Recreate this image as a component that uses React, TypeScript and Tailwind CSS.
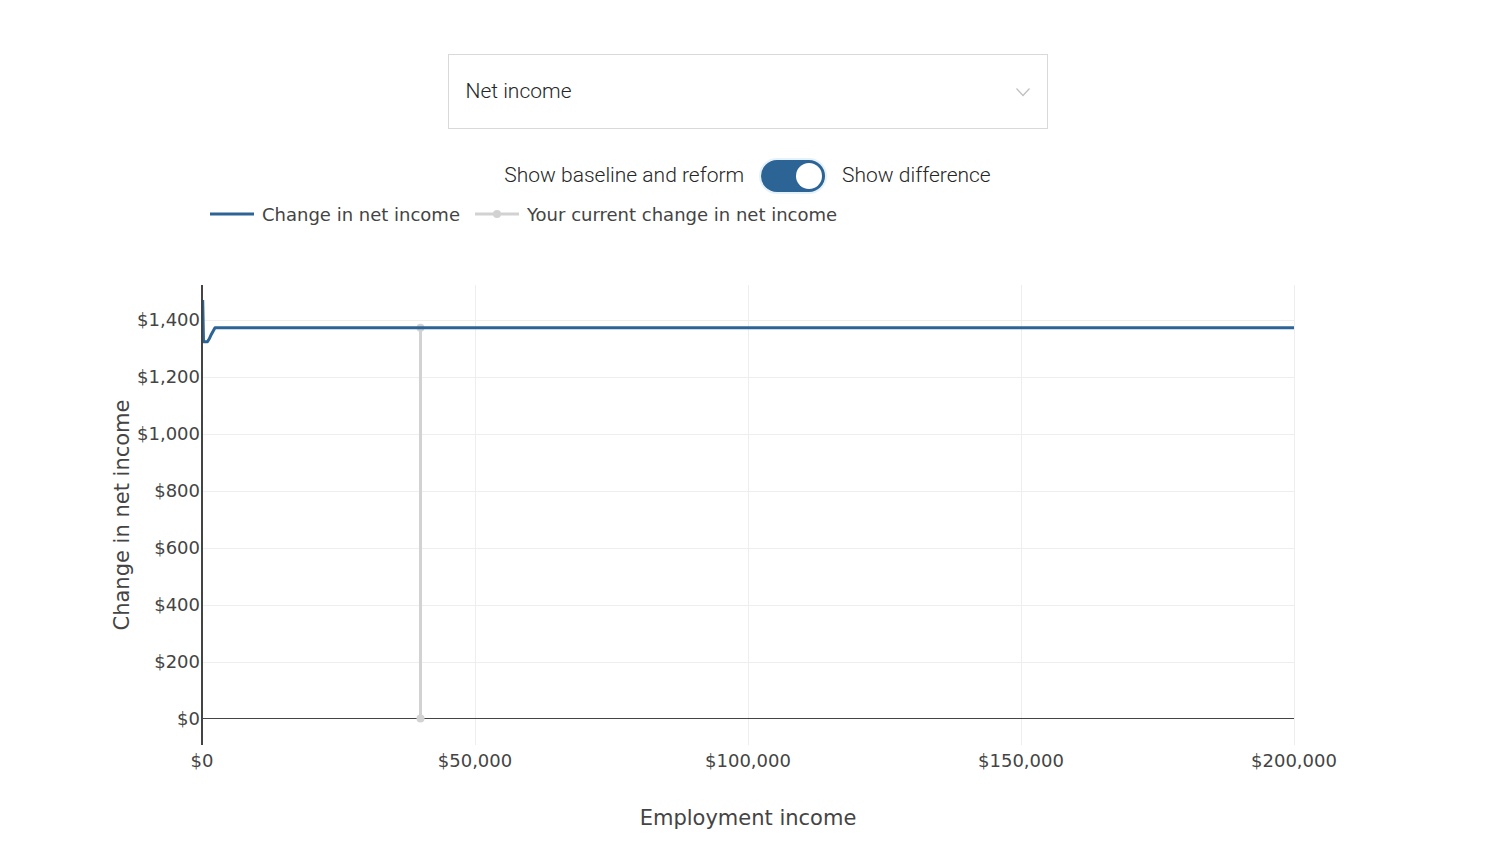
const BLUE = '#2c6496';
const GREY = '#d2d2d2';
const AXIS = '#444444';
const CHART_FONT = '"DejaVu Sans", Verdana, sans-serif';

// plot geometry in page coordinates
const X0 = 202;
const X1 = 1294;
const Y_TOP = 285;
const Y_BOTTOM = 745;
const Y_ZERO = 718.5;
const PX_PER_DOLLAR = 57 / 200;

const yTicks = [0, 200, 400, 600, 800, 1000, 1200, 1400];
const xTicks = [0, 50000, 100000, 150000, 200000];

const yOf = (v: number) => Y_ZERO - v * PX_PER_DOLLAR;
const xOf = (v: number) => X0 + (v / 200000) * (X1 - X0);
const money = (v: number) => '$' + v.toLocaleString('en-US');

function Chevron() {
  return (
    <svg width="16" height="16" viewBox="0 0 16 16" fill="none" className="text-[#bfbfbf]">
      <path d="M1.5 4.5 L8 11.5 L14.5 4.5" stroke="currentColor" strokeWidth="1.2" />
    </svg>
  );
}

function Toggle() {
  return (
    <div className="flex h-[36px] w-[68px] items-center rounded-full bg-[#e6f2fb] p-[2px]">
      <div className="flex h-[32px] w-[64px] items-center justify-end rounded-full bg-[#2c6496] pr-[3px]">
        <div className="h-[26px] w-[26px] rounded-full bg-white" />
      </div>
    </div>
  );
}

function Chart() {
  const lineY = 327.7;
  const curve = `M202.7 300 L203.5 341.7 L207.5 341.7 Q209.5 339 211 335 L215 ${lineY} L${X1} ${lineY}`;
  return (
    <svg width="1494" height="672" viewBox="0 194 1494 672" style={{ fontFamily: CHART_FONT }}>
      {/* grid */}
      {yTicks.slice(1).map((t) => (
        <line key={t} x1={X0} x2={X1} y1={Math.round(yOf(t)) + 0.5} y2={Math.round(yOf(t)) + 0.5} stroke="#eeeeee" strokeWidth="1" />
      ))}
      {xTicks.slice(1).map((t) => (
        <line key={t} x1={Math.round(xOf(t)) + 0.5} x2={Math.round(xOf(t)) + 0.5} y1={Y_TOP} y2={Y_BOTTOM} stroke="#eeeeee" strokeWidth="1" />
      ))}
      {/* zero line */}
      <line x1={X0} x2={X1} y1={Y_ZERO} y2={Y_ZERO} stroke={AXIS} strokeWidth="1" />

      {/* current marker */}
      <line x1={420.5} x2={420.5} y1={lineY} y2={Y_ZERO} stroke={GREY} strokeWidth="3" />
      <circle cx={420.5} cy={lineY} r="4" fill={GREY} />
      <circle cx={420.5} cy={Y_ZERO} r="4" fill={GREY} />

      {/* series */}
      <path d={curve} fill="none" stroke={BLUE} strokeWidth="3" strokeLinejoin="round" />

      {/* y axis line */}
      <line x1={X0} x2={X0} y1={Y_TOP} y2={Y_BOTTOM} stroke={AXIS} strokeWidth="2" />

      {/* tick labels */}
      {yTicks.map((t) => (
        <text key={t} x={200} y={yOf(t)} dy="0.36em" textAnchor="end" fontSize="18" fill={AXIS}>
          {money(t)}
        </text>
      ))}
      {xTicks.map((t) => (
        <text key={t} x={xOf(t)} y={761} dy="0.36em" textAnchor="middle" fontSize="18" fill={AXIS}>
          {money(t)}
        </text>
      ))}

      {/* axis titles */}
      <text x={748} y={817} dy="0.36em" textAnchor="middle" fontSize="21" fill={AXIS}>
        Employment income
      </text>
      <text
        x={0}
        y={0}
        dy="0.36em"
        textAnchor="middle"
        fontSize="21"
        fill={AXIS}
        transform="translate(121 515) rotate(-90)"
      >
        Change in net income
      </text>

      {/* legend */}
      <line x1={210} x2={254} y1={214} y2={214} stroke={BLUE} strokeWidth="3" />
      <text x={262} y={215} dy="0.36em" fontSize="18" fill={AXIS}>
        Change in net income
      </text>
      <line x1={475} x2={519} y1={214} y2={214} stroke={GREY} strokeWidth="3" />
      <circle cx={497} cy={214} r="4" fill={GREY} />
      <text x={527} y={215} dy="0.36em" fontSize="18" fill={AXIS}>
        Your current change in net income
      </text>
    </svg>
  );
}

export default function App() {
  return (
    <div className="flex min-h-[866px] w-[1494px] flex-col items-center bg-white font-['Roboto',sans-serif] text-[#262626]">
      <div className="mt-[54px] ml-[1px] flex h-[75px] w-[600px] items-center justify-between border border-[#d9d9d9] bg-white pl-[17px] pr-[16px]">
        <span className="text-[21px] font-light">Net income</span>
        <Chevron />
      </div>
      <div className="mt-[29px] ml-[1px] flex h-[36px] items-center gap-[15px] text-[21px] font-light">
        <span>Show baseline and reform</span>
        <Toggle />
        <span>Show difference</span>
      </div>
      <Chart />
    </div>
  );
}
